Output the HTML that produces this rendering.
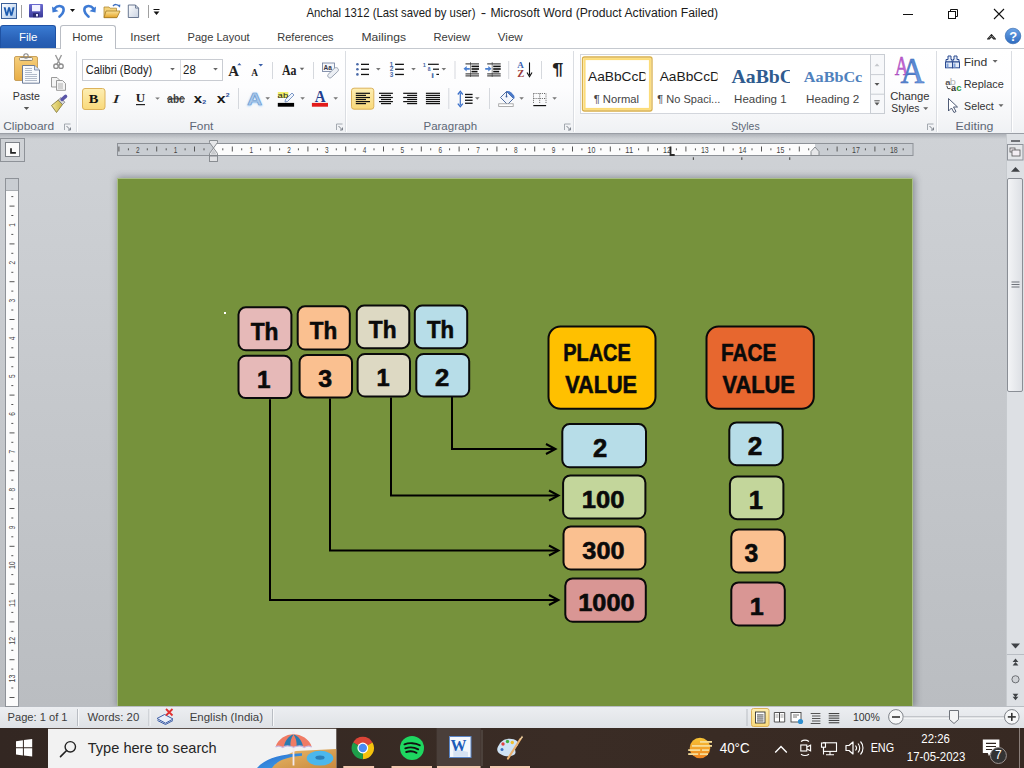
<!DOCTYPE html>
<html><head><meta charset="utf-8">
<style>

*{margin:0;padding:0;box-sizing:border-box}
html,body{width:1024px;height:768px;overflow:hidden;background:#d0d3d8;font-family:"Liberation Sans",sans-serif;position:relative}
.a{position:absolute}
#title{left:0;top:0;width:1024px;height:25px;background:#fff}
#tabs{left:0;top:25px;width:1024px;height:23px;background:#fff}
#ribbon{left:0;top:48px;width:1024px;height:86px;background:linear-gradient(#ffffff 0%,#fdfdfe 45%,#f5f6f8 80%,#eff1f4 100%);border-top:1px solid #c5c9cf;border-bottom:1px solid #9a9ea5}
#work{left:0;top:134px;width:1024px;height:572px;background:linear-gradient(#cfd2d6,#babdc1)}
#page{left:117px;top:178px;width:796px;height:528px;background:#76923c;border:1px solid #a9bf85;border-bottom:none;box-shadow:1px 0 7px 1px rgba(40,45,60,.4)}
#status{left:0;top:706px;width:1024px;height:22px;background:linear-gradient(#eceef1,#dfe2e6);border-top:1px solid #b9bdc3}
#taskbar{left:0;top:728px;width:1024px;height:40px;background:linear-gradient(90deg,#332722 0%,#3a2c25 55%,#372922 100%)}
.sep{position:absolute;width:2px;border-left:1px solid #dadde2;border-right:1px solid #fff}

</style></head><body>
<div id="title" class="a"></div>
<div id="tabs" class="a"></div>
<div id="ribbon" class="a"></div>
<div class="a" style="left:0;top:25px;width:56px;height:23px;background:linear-gradient(#3a7bd2,#2a62b8 60%,#245aad);border:1px solid #1f52a3;border-bottom:none;border-radius:3px 3px 0 0"></div>
<div class="a" style="left:60px;top:25px;width:56px;height:24px;background:#fff;border:1px solid #b9bdc4;border-bottom:none;border-radius:3px 3px 0 0"></div>
<div class="sep" style="left:76px;top:51px;height:81px"></div>
<div class="sep" style="left:345px;top:51px;height:81px"></div>
<div class="sep" style="left:573px;top:51px;height:81px"></div>
<div class="sep" style="left:936px;top:51px;height:81px"></div>
<div class="sep" style="left:1011px;top:51px;height:81px"></div>
<div id="work" class="a"></div>
<div class="a" style="left:0;top:134px;width:1024px;height:5px;background:linear-gradient(rgba(60,66,80,.22),rgba(60,66,80,0))"></div>
<div id="page" class="a"></div>
<svg class="a" style="left:0;top:0" width="1024" height="768" viewBox="0 0 1024 768">
<g fill="none" stroke="#000" stroke-width="2" stroke-linecap="butt" stroke-linejoin="miter">
<path d="M452,397 V449 H555 M391,397.5 V495.5 H558 M330,398.4 V550.5 H558 M270,399.2 V600 H558"/>
<path d="M546,444 L555.5,449 L546,454 M549,490.5 L558.5,495.5 L549,500.5 M549,545.5 L558.5,550.5 L549,555.5 M549,595 L558.5,600 L549,605"/>
</g>
<g stroke="#0a0a0a" stroke-width="2.0">
<rect x="238.50" y="307.30" width="52.90" height="43.00" rx="7.3" fill="#e6b9b8"/>
<rect x="297.70" y="306.30" width="52.10" height="43.20" rx="7.3" fill="#fac090"/>
<rect x="356.80" y="305.60" width="52.50" height="42.60" rx="7.3" fill="#ddd9c3"/>
<rect x="414.80" y="305.60" width="52.40" height="42.60" rx="7.3" fill="#b7dde8"/>
<rect x="238.50" y="355.70" width="52.90" height="42.40" rx="7.3" fill="#e6b9b8"/>
<rect x="299.60" y="354.90" width="52.40" height="42.50" rx="7.3" fill="#fac090"/>
<rect x="357.60" y="354.00" width="52.40" height="42.50" rx="7.3" fill="#ddd9c3"/>
<rect x="416.30" y="354.00" width="52.90" height="42.50" rx="7.3" fill="#b7dde8"/>
<rect x="562.30" y="424.10" width="83.70" height="43.20" rx="7.3" fill="#b7dde8"/>
<rect x="563.10" y="475.40" width="82.30" height="43.10" rx="7.3" fill="#c3d69b"/>
<rect x="563.50" y="526.40" width="81.90" height="43.10" rx="7.3" fill="#fac090"/>
<rect x="565.30" y="578.40" width="80.50" height="43.40" rx="7.3" fill="#d99694"/>
<rect x="729.30" y="422.40" width="53.40" height="42.80" rx="7.3" fill="#b7dde8"/>
<rect x="729.90" y="476.40" width="53.50" height="42.80" rx="7.3" fill="#c3d69b"/>
<rect x="731.30" y="529.40" width="53.50" height="43.10" rx="7.3" fill="#fac090"/>
<rect x="731.30" y="582.40" width="53.50" height="43.10" rx="7.3" fill="#d99694"/>
<rect x="548.50" y="326.50" width="107.00" height="82.30" rx="12" fill="#ffc000"/>
<rect x="706.50" y="326.50" width="107.30" height="82.30" rx="12" fill="#e7672f"/>
</g>
<g fill="#0a0a0a" stroke="#0a0a0a" stroke-width="0.6" font-family="Liberation Sans" font-weight="bold">
<text transform="translate(250.67,339.90) scale(0.923,1)" font-size="24.69">Th</text>
<text transform="translate(309.77,339.00) scale(0.917,1)" font-size="24.55">Th</text>
<text transform="translate(368.87,337.60) scale(0.959,1)" font-size="23.59">Th</text>
<text transform="translate(426.98,337.60) scale(0.944,1)" font-size="23.59">Th</text>
<text transform="translate(257.12,387.80) scale(1.004,1)" font-size="24.20">1</text>
<text transform="translate(318.18,386.80) scale(1.061,1)" font-size="23.43">3</text>
<text transform="translate(376.46,385.90) scale(0.966,1)" font-size="24.49">1</text>
<text transform="translate(435.00,386.00) scale(1.055,1)" font-size="24.29">2</text>
<text transform="translate(592.90,457.30) scale(1.025,1)" font-size="25.00">2</text>
<text transform="translate(581.84,508.30) scale(1.062,1)" font-size="24.08">100</text>
<text transform="translate(582.37,558.90) scale(1.074,1)" font-size="23.52">300</text>
<text transform="translate(578.25,610.90) scale(1.064,1)" font-size="23.80">1000</text>
<text transform="translate(747.68,455.40) scale(1.032,1)" font-size="25.43">2</text>
<text transform="translate(748.64,509.20) scale(1.003,1)" font-size="25.51">1</text>
<text transform="translate(744.38,562.10) scale(0.986,1)" font-size="25.00">3</text>
<text transform="translate(749.86,615.00) scale(1.015,1)" font-size="24.78">1</text>
<text transform="translate(563.20,360.70) scale(0.824,1)" font-size="24.20">PLACE</text>
<text transform="translate(565.18,392.60) scale(0.901,1)" font-size="24.06">VALUE</text>
<text transform="translate(721.05,360.60) scale(0.860,1)" font-size="24.06">FACE</text>
<text transform="translate(722.58,392.60) scale(0.905,1)" font-size="24.06">VALUE</text>
</g>
<rect x="224" y="312" width="2" height="2" fill="#fff"/>
</svg>
<div id="status" class="a"></div>
<div id="taskbar" class="a"></div>
<svg class="a" style="left:0;top:0" width="1024" height="768" font-family="Liberation Sans">
<defs><linearGradient id="gW" x1="0" y1="0" x2="1" y2="1"><stop offset="0" stop-color="#ffffff"/><stop offset="1" stop-color="#a9c6ea"/></linearGradient><linearGradient id="gSave" x1="0" y1="0" x2="0" y2="1"><stop offset="0" stop-color="#6a6ad0"/><stop offset="1" stop-color="#3a3a98"/></linearGradient><linearGradient id="gFold" x1="0" y1="0" x2="0" y2="1"><stop offset="0" stop-color="#fbe49a"/><stop offset="1" stop-color="#e6a52a"/></linearGradient><linearGradient id="gDoc" x1="0" y1="0" x2="1" y2="1"><stop offset="0" stop-color="#ffffff"/><stop offset="1" stop-color="#c9d3e3"/></linearGradient><linearGradient id="gHelp" x1="0" y1="0" x2="0" y2="1"><stop offset="0" stop-color="#6aa3e6"/><stop offset="1" stop-color="#2f6cc0"/></linearGradient></defs>
<rect x="1.5" y="3.5" width="15" height="15" fill="url(#gW)" stroke="#3a5f99" stroke-width="1"/>
<path d="M3.6,7.2 L5.6,7.2 L6.8,12.6 L8.2,7.2 L10,7.2 L11.3,12.6 L12.5,7.2 L14.6,7.2 L12.3,15.8 L10.4,15.8 L9.1,10.8 L7.7,15.8 L5.9,15.8 Z" fill="#1d5cb0"/>
<rect x="21" y="5" width="1" height="13" fill="#a0a0a0"/>
<rect x="29" y="4" width="14" height="13.6" rx="1" fill="url(#gSave)"/>
<rect x="32" y="5" width="8.2" height="6.3" fill="#f2f2ff"/>
<rect x="33" y="13.2" width="6" height="4" fill="#2a2a70"/><rect x="36" y="14" width="2" height="2.4" fill="#e8e8ff"/>
<path d="M54.5,8.5 C58,4.5 64.5,5.5 63.5,11 C63,14 60.5,15.8 59.5,16.6" fill="none" stroke="#3d7ad4" stroke-width="2.6" stroke-linecap="round"/>
<path d="M52,6.5 L52.5,12.6 L58.5,11.2 Z" fill="#3d7ad4"/>
<path d="M70,9 L75,9 L72.5,12.1 Z" fill="#111"/>
<path d="M93.5,8.5 C90,4.5 83.5,5.5 84.5,11 C85,14 87.5,15.8 88.5,16.6" fill="none" stroke="#3d7ad4" stroke-width="2.6" stroke-linecap="round"/>
<path d="M96,6.5 L95.5,12.6 L89.5,11.2 Z" fill="#3d7ad4"/>
<path d="M104,7 L109,7 L110,8.2 L116.5,8.2 L116.5,17.6 L104,17.6 Z" fill="#f3d27a" stroke="#b18a35" stroke-width="0.8"/>
<path d="M106,11 L120,11 L117,17.6 L104,17.6 Z" fill="url(#gFold)" stroke="#a47a22" stroke-width="0.8"/>
<path d="M113,6 C114.5,4 117.5,4 119,6.2" fill="none" stroke="#3d6fc0" stroke-width="1.3"/><path d="M117.6,5 L120,7.8 L120.4,4.6 Z" fill="#3d6fc0"/>
<path d="M128.3,5 L135.5,5 L138.6,8.1 L138.6,17.5 L128.3,17.5 Z" fill="url(#gDoc)" stroke="#5a6a86" stroke-width="0.9"/>
<path d="M135.5,5 L135.5,8.1 L138.6,8.1" fill="none" stroke="#5a6a86" stroke-width="0.8"/>
<rect x="148" y="5" width="1" height="13" fill="#a0a0a0"/>
<rect x="153.5" y="9" width="6" height="1" fill="#111"/><path d="M153.6,11.6 L159.4,11.6 L156.5,14.9 Z" fill="#111"/>
<rect x="903" y="14" width="10" height="1" fill="#111"/>
<rect x="948.5" y="11.5" width="7" height="7" fill="none" stroke="#111" stroke-width="1"/>
<path d="M950.5,11.5 V9.5 H957.5 V16.5 H955.5" fill="none" stroke="#111" stroke-width="1"/>
<path d="M994,9 L1004,19 M1004,9 L994,19" stroke="#111" stroke-width="1.1"/>
<path d="M987.5,39 L991.5,34.5 L995.5,39 L993.8,39 L991.5,36.6 L989.2,39 Z" fill="none" stroke="#222" stroke-width="1.1" stroke-linejoin="round"/>
<circle cx="1013" cy="36" r="7.8" fill="url(#gHelp)" stroke="#2a5fa8" stroke-width="0.6"/>
<text x="1009.3" y="41.2" font-size="13" font-weight="bold" fill="#fff">?</text>
<defs><linearGradient id="gClip" x1="0" y1="0" x2="0" y2="1"><stop offset="0" stop-color="#f6cf7c"/><stop offset="1" stop-color="#e8ad45"/></linearGradient><linearGradient id="gBrush" x1="0" y1="0" x2="1" y2="0"><stop offset="0" stop-color="#f3e79a"/><stop offset="1" stop-color="#c9b545"/></linearGradient></defs>
<rect x="14.5" y="56.5" width="23" height="24" rx="1.5" fill="url(#gClip)" stroke="#c49a52" stroke-width="0.9"/>
<rect x="19.5" y="57.5" width="13" height="3" rx="1" fill="#f4f4f4" stroke="#8b7d60" stroke-width="0.9"/>
<circle cx="26" cy="56" r="2.2" fill="none" stroke="#8a8a8a" stroke-width="1.1"/>
<path d="M22.5,65.5 L34.5,65.5 L39.5,70 L39.5,83.2 L22.5,83.2 Z" fill="#f8fafd" stroke="#5f6f8f" stroke-width="0.9"/>
<path d="M34.5,65.5 L34.5,70 L39.5,70" fill="#dde6f2" stroke="#5f6f8f" stroke-width="0.7"/>
<path d="M25,68.5 H32 M25,70.5 H32 M25,72.5 H32 M25,74.5 H37 M25,76.5 H37 M25,78.5 H37 M25,80.5 H37" stroke="#a9b3c4" stroke-width="0.9"/>
<path d="M23.8,107 L29.2,107 L26.5,110 Z" fill="#555"/>
<path d="M55.5,55 L60.5,65 M61.5,55 L56.5,65" stroke="#9a9a9a" stroke-width="1.4"/>
<circle cx="56" cy="66.2" r="2.2" fill="none" stroke="#8f8f8f" stroke-width="1.4"/><circle cx="61" cy="66.2" r="2.2" fill="none" stroke="#8f8f8f" stroke-width="1.4"/>
<path d="M51.5,77.5 L57,77.5 L59.5,80 L59.5,87 L51.5,87 Z" fill="#f4f4f4" stroke="#8f8f8f" stroke-width="0.9"/>
<path d="M56.5,80.5 L62.5,80.5 L65.5,83.5 L65.5,90.3 L56.5,90.3 Z" fill="#f4f4f4" stroke="#8f8f8f" stroke-width="0.9"/>
<path d="M58,84 H63 M58,86 H63 M58,88 H63" stroke="#a0a0a0" stroke-width="0.8"/>
<path d="M51.5,105.5 L58.5,99.8 L62.5,104.5 L56.5,112.5 Z" fill="url(#gBrush)" stroke="#7d7232" stroke-width="0.8"/>
<path d="M58.3,100 L61,97.6 L64.8,102.3 L62.5,104.5 Z" fill="#dcdcdc" stroke="#6a6a6a" stroke-width="0.7"/>
<path d="M62,99.5 L65.6,96.4" stroke="#5a55a8" stroke-width="3.4" stroke-linecap="round"/>
<path d="M64.5,130 V124 H70.5" fill="none" stroke="#9aa0a8" stroke-width="0.9"/><path d="M66.5,126 L70.5,130 M70.5,127.5 V130 H68" fill="none" stroke="#7d838c" stroke-width="1"/>
<defs><linearGradient id="gSel" x1="0" y1="0" x2="0" y2="1"><stop offset="0" stop-color="#fdeeb3"/><stop offset="1" stop-color="#f9d97a"/></linearGradient><filter id="glow" x="-50%" y="-50%" width="200%" height="200%"><feGaussianBlur stdDeviation="1.2"/></filter></defs>
<rect x="82.5" y="59.5" width="140" height="21" fill="#fff" stroke="#c9ccd2" stroke-width="1"/>
<rect x="180" y="60" width="1" height="20" fill="#d9dce1"/>
<text transform="translate(85.75,74.40) scale(0.880,1)" font-size="12.46" fill="#1e1e1e">Calibri (Body)</text>
<path d="M170.20,68.10 L174.80,68.10 L172.50,70.50 Z" fill="#666"/>
<text transform="translate(183.03,74.40) scale(0.954,1)" font-size="12.03" fill="#1e1e1e">28</text>
<path d="M213.20,68.10 L217.80,68.10 L215.50,70.50 Z" fill="#666"/>
<text transform="translate(228.35,75.80) scale(1.013,1)" font-family="Liberation Serif" font-size="14.70" fill="#222" font-weight="bold">A</text>
<path d="M237.3,65.3 L241.4,65.3 L239.35,63 Z" fill="#3a5fa8"/>
<text transform="translate(251.31,75.80) scale(0.858,1)" font-family="Liberation Serif" font-size="10.91" fill="#222" font-weight="bold">A</text>
<path d="M258.5,64 L263,64 L260.75,66.6 Z" fill="#3a5fa8"/>
<rect x="272" y="62" width="1" height="17" fill="#d5d8dd"/>
<text transform="translate(281.98,75.30) scale(0.784,1)" font-family="Liberation Serif" font-size="15.15" fill="#222" font-weight="bold">Aa</text>
<path d="M299.70,67.80 L304.30,67.80 L302.00,70.20 Z" fill="#666"/>
<rect x="313" y="62" width="1" height="17" fill="#d5d8dd"/>
<rect x="322.5" y="63" width="12" height="8.5" fill="#f4f6fa" stroke="#6b7b99" stroke-width="0.8"/>
<text x="323.6" y="70" font-size="6.5" font-weight="bold" fill="#334">Aa</text>
<path d="M328,74.5 L334.5,68.2 C335.5,67.3 337.3,67.5 338,68.6 C338.7,69.6 338.5,70.8 337.6,71.6 L331.4,77.4 C330.5,78.2 329,78.1 328.3,77.1 C327.6,76.3 327.5,75.2 328,74.5 Z" fill="#eceff4" stroke="#8d97a8" stroke-width="0.9"/>
<rect x="82.5" y="88.5" width="22.5" height="21" rx="2.5" fill="url(#gSel)" stroke="#dcb25a" stroke-width="1"/>
<text transform="translate(88.78,102.70) scale(1.123,1)" font-family="Liberation Serif" font-size="12.82" fill="#111" font-weight="bold">B</text>
<text transform="translate(112.21,102.70) scale(1.747,1)" font-family="Liberation Serif" font-size="12.82" fill="#222" font-style="italic">I</text>
<text transform="translate(135.67,102.30) scale(1.067,1)" font-family="Liberation Serif" font-size="12.21" fill="#222" font-weight="bold">U</text>
<rect x="136" y="104" width="9" height="1.2" fill="#222"/>
<path d="M155.20,97.40 L159.80,97.40 L157.50,99.80 Z" fill="#777"/>
<text transform="translate(167.30,102.70) scale(0.810,1)" font-family="Liberation Sans" font-size="12.41" fill="#444" font-weight="bold">abc</text>
<rect x="167" y="98.3" width="18" height="1.1" fill="#333"/>
<text transform="translate(193.85,103.20) scale(1.169,1)" font-family="Liberation Sans" font-size="12.83" fill="#1a1a1a" font-weight="bold">x</text>
<text transform="translate(202.35,104.20) scale(1.240,1)" font-family="Liberation Sans" font-size="5.71" fill="#2c4d9a" font-weight="bold">2</text>
<text transform="translate(216.84,103.20) scale(1.241,1)" font-family="Liberation Sans" font-size="12.83" fill="#1a1a1a" font-weight="bold">x</text>
<text transform="translate(225.76,97.00) scale(1.203,1)" font-family="Liberation Sans" font-size="5.71" fill="#2c4d9a" font-weight="bold">2</text>
<rect x="238" y="88" width="1" height="21" fill="#d5d8dd"/>
<g filter="url(#glow)"><text transform="translate(246.43,105.60) scale(1.300,1)" font-family="Liberation Sans" font-size="17.68" fill="#9fd0ff" font-weight="bold">A</text></g>
<text transform="translate(247.29,105.00) scale(1.292,1)" font-family="Liberation Sans" font-size="15.94" fill="#a9c8ea" font-weight="bold" stroke="#6d9bd0" stroke-width="0.6">A</text>
<path d="M265.40,97.30 L270.00,97.30 L267.70,99.70 Z" fill="#777"/>
<rect x="277.8" y="92" width="10.5" height="6" fill="#f0ee6a"/>
<text transform="translate(277.62,97.80) scale(1.189,1)" font-family="Liberation Sans" font-size="8.00" fill="#222">ab</text>
<path d="M285.5,99.5 L292,93 L294,95 L287.5,101.5 L285,102 Z" fill="#eef3fb" stroke="#5d7fb8" stroke-width="0.8"/>
<rect x="277.8" y="102.9" width="16.3" height="3.8" fill="#000"/>
<path d="M300.30,97.30 L304.90,97.30 L302.60,99.70 Z" fill="#777"/>
<text transform="translate(314.75,101.90) scale(0.936,1)" font-family="Liberation Serif" font-size="16.06" fill="#1f3f8f" font-weight="bold">A</text>
<rect x="311.9" y="102.9" width="16.1" height="3.8" fill="#e21b1b"/>
<path d="M333.40,97.30 L338.00,97.30 L335.70,99.70 Z" fill="#777"/>
<path d="M336.5,130 V124 H342.5" fill="none" stroke="#9aa0a8" stroke-width="0.9"/><path d="M338.5,126 L342.5,130 M342.5,127.5 V130 H340" fill="none" stroke="#7d838c" stroke-width="1"/>
<circle cx="357.4" cy="64.3" r="1.3" fill="#4a6aa8"/>
<rect x="361" y="63.7" width="8" height="1.3" fill="#111"/>
<circle cx="357.4" cy="69.2" r="1.3" fill="#4a6aa8"/>
<rect x="361" y="68.6" width="8" height="1.3" fill="#111"/>
<circle cx="357.4" cy="74.4" r="1.3" fill="#4a6aa8"/>
<rect x="361" y="73.8" width="8" height="1.3" fill="#111"/>
<path d="M376.00,68.10 L380.60,68.10 L378.30,70.50 Z" fill="#777"/>
<text transform="translate(389.59,66.50) scale(1.044,1)" font-family="Liberation Sans" font-size="6.52" fill="#4a6aa8" font-weight="bold">1</text>
<rect x="395.1" y="63.7" width="8.8" height="1.3" fill="#111"/>
<text transform="translate(389.77,71.40) scale(1.037,1)" font-family="Liberation Sans" font-size="6.43" fill="#4a6aa8" font-weight="bold">2</text>
<rect x="395.1" y="68.6" width="8.8" height="1.3" fill="#111"/>
<text transform="translate(389.84,76.60) scale(1.006,1)" font-family="Liberation Sans" font-size="6.43" fill="#4a6aa8" font-weight="bold">3</text>
<rect x="395.1" y="73.8" width="8.8" height="1.3" fill="#111"/>
<path d="M411.20,68.10 L415.80,68.10 L413.50,70.50 Z" fill="#777"/>
<text transform="translate(422.66,66.60) scale(0.922,1)" font-family="Liberation Sans" font-size="6.23" fill="#4a6aa8" font-weight="bold">1</text>
<rect x="428" y="63.7" width="10.8" height="1.2" fill="#111"/>
<text transform="translate(427.85,70.80) scale(0.750,1)" font-family="Liberation Sans" font-size="6.48" fill="#4a6aa8" font-weight="bold">a</text>
<rect x="433" y="68.6" width="6" height="1.2" fill="#111"/>
<text transform="translate(430.82,77.50) scale(2.197,1)" font-family="Liberation Sans" font-size="7.59" fill="#4a6aa8">i</text>
<rect x="436.4" y="73.8" width="2.6" height="1.2" fill="#111"/>
<path d="M441.50,68.10 L446.10,68.10 L443.80,70.50 Z" fill="#777"/>
<rect x="454.5" y="61" width="1" height="18" fill="#d5d8dd"/>
<path d="M470.5,62.5 V77" stroke="#222" stroke-width="1" stroke-dasharray="1,1"/>
<rect x="465.5" y="63.4" width="13.5" height="1" fill="#222"/>
<rect x="471.5" y="65.6" width="7.5" height="1.6" fill="#111"/>
<rect x="471.5" y="68.2" width="7.5" height="1.6" fill="#111"/>
<rect x="471.5" y="70.8" width="6" height="1.6" fill="#111"/>
<rect x="465.5" y="73.4" width="13.5" height="1" fill="#222"/>
<rect x="465.5" y="75.4" width="13.5" height="1" fill="#222"/>
<path d="M463.5,68.8 L466.7,66 L466.7,67.9 L469.8,67.9 L469.8,69.7 L466.7,69.7 L466.7,71.6 Z" fill="#4a7fd0"/>
<path d="M492.2,62.5 V77" stroke="#222" stroke-width="1" stroke-dasharray="1,1"/>
<rect x="487.2" y="63.4" width="13.5" height="1" fill="#222"/>
<rect x="493.2" y="65.6" width="7.5" height="1.6" fill="#111"/>
<rect x="493.2" y="68.2" width="7.5" height="1.6" fill="#111"/>
<rect x="493.2" y="70.8" width="6" height="1.6" fill="#111"/>
<rect x="487.2" y="73.4" width="13.5" height="1" fill="#222"/>
<rect x="487.2" y="75.4" width="13.5" height="1" fill="#222"/>
<path d="M491.5,68.8 L488.3,66 L488.3,67.9 L485.2,67.9 L485.2,69.7 L488.3,69.7 L488.3,71.6 Z" fill="#4a7fd0"/>
<rect x="508.2" y="61" width="1" height="18" fill="#d5d8dd"/>
<text transform="translate(517.31,68.30) scale(1.089,1)" font-family="Liberation Serif" font-size="8.33" fill="#3a5fb0" font-weight="bold">A</text>
<text transform="translate(517.13,76.50) scale(1.077,1)" font-family="Liberation Serif" font-size="9.77" fill="#9a3a3a" font-weight="bold">Z</text>
<path d="M529.5,62.4 V75" stroke="#111" stroke-width="1.1"/><path d="M527,72.5 L529.5,76.6 L532,72.5" fill="none" stroke="#111" stroke-width="1.1"/>
<rect x="541" y="61" width="1" height="18" fill="#d5d8dd"/>
<text transform="translate(552.20,75.30) scale(1.243,1)" font-family="Liberation Sans" font-size="16.09" fill="#222" font-weight="bold">¶</text>
<rect x="351.5" y="88.2" width="22.3" height="21" rx="2.5" fill="url(#gSel)" stroke="#dcb25a" stroke-width="1"/>
<rect x="355.8" y="92.7" width="14.2" height="1.2" fill="#111"/>
<rect x="379" y="92.7" width="13.9" height="1.2" fill="#111"/>
<rect x="403.2" y="92.7" width="13.9" height="1.2" fill="#111"/>
<rect x="425.9" y="92.7" width="14.1" height="1.2" fill="#111"/>
<rect x="355.8" y="94.8" width="10.2" height="1.2" fill="#111"/>
<rect x="381" y="94.8" width="10" height="1.2" fill="#111"/>
<rect x="407.1" y="94.8" width="10" height="1.2" fill="#111"/>
<rect x="425.9" y="94.8" width="14.1" height="1.2" fill="#111"/>
<rect x="355.8" y="96.9" width="14.2" height="1.2" fill="#111"/>
<rect x="379" y="96.9" width="13.9" height="1.2" fill="#111"/>
<rect x="403.2" y="96.9" width="13.9" height="1.2" fill="#111"/>
<rect x="425.9" y="96.9" width="14.1" height="1.2" fill="#111"/>
<rect x="355.8" y="98.9" width="10.2" height="1.2" fill="#111"/>
<rect x="381" y="98.9" width="10" height="1.2" fill="#111"/>
<rect x="407.1" y="98.9" width="10" height="1.2" fill="#111"/>
<rect x="425.9" y="98.9" width="14.1" height="1.2" fill="#111"/>
<rect x="355.8" y="101.0" width="14.2" height="1.2" fill="#111"/>
<rect x="379" y="101.0" width="13.9" height="1.2" fill="#111"/>
<rect x="403.2" y="101.0" width="13.9" height="1.2" fill="#111"/>
<rect x="425.9" y="101.0" width="14.1" height="1.2" fill="#111"/>
<rect x="355.8" y="103.0" width="10.2" height="1.2" fill="#111"/>
<rect x="381" y="103.0" width="10" height="1.2" fill="#111"/>
<rect x="407.1" y="103.0" width="10" height="1.2" fill="#111"/>
<rect x="425.9" y="103.0" width="14.1" height="1.2" fill="#111"/>
<rect x="448.3" y="88" width="1" height="21" fill="#d5d8dd"/>
<path d="M460.3,93 V105" stroke="#3a6fc8" stroke-width="1.2"/><path d="M457.8,94.5 L460.3,91.4 L462.8,94.5 M457.8,103.6 L460.3,106.7 L462.8,103.6" fill="none" stroke="#3a6fc8" stroke-width="1.3"/>
<rect x="465" y="93.8" width="7.6" height="1.3" fill="#111"/>
<rect x="465" y="96.7" width="7.6" height="1.3" fill="#111"/>
<rect x="465" y="99.6" width="7.6" height="1.3" fill="#111"/>
<rect x="465" y="102.6" width="7.6" height="1.3" fill="#111"/>
<path d="M475.00,97.30 L479.60,97.30 L477.30,99.70 Z" fill="#777"/>
<rect x="489" y="88" width="1" height="21" fill="#d5d8dd"/>
<path d="M500.5,97.5 L506.5,91.5 L513.5,98.5 L507.5,104.5 Z" fill="#f2f5fb" stroke="#3d5e98" stroke-width="0.9"/>
<path d="M506.5,91.5 C508.5,90 511.5,92 514,95.5 C515,97.5 514.5,99.5 513.5,98.5" fill="#4a79c8"/>
<path d="M506.5,91.5 V96" stroke="#3d5e98" stroke-width="0.9"/><circle cx="506.5" cy="96.5" r="0.9" fill="#3d5e98"/>
<rect x="498.7" y="103.8" width="14.5" height="2.7" fill="#fff" stroke="#9a9a9a" stroke-width="0.8"/>
<path d="M519.30,97.30 L523.90,97.30 L521.60,99.70 Z" fill="#777"/>
<path d="M533.5,93.5 H546 M533.5,98.5 H546 M533.5,93.5 V104 M539.7,93.5 V104 M546,93.5 V104" stroke="#555" stroke-width="0.9" stroke-dasharray="1,1.1"/>
<rect x="533.3" y="105" width="12.8" height="1.2" fill="#111"/>
<path d="M552.30,97.30 L556.90,97.30 L554.60,99.70 Z" fill="#777"/>
<path d="M564.5,130 V124 H570.5" fill="none" stroke="#9aa0a8" stroke-width="0.9"/><path d="M566.5,126 L570.5,130 M570.5,127.5 V130 H568" fill="none" stroke="#7d838c" stroke-width="1"/>
<defs><clipPath id="cN"><rect x="582" y="60" width="63.5" height="30"/></clipPath><clipPath id="cNS"><rect x="655" y="60" width="62.6" height="30"/></clipPath><clipPath id="cH1"><rect x="725" y="60" width="65" height="30"/></clipPath><linearGradient id="gSty" x1="0" y1="0" x2="0" y2="1"><stop offset="0" stop-color="#fdf6d8"/><stop offset="0.5" stop-color="#ffffff"/><stop offset="1" stop-color="#fdf3cf"/></linearGradient><linearGradient id="gA1" x1="0" y1="0" x2="1" y2="1"><stop offset="0" stop-color="#b04ac0"/><stop offset="1" stop-color="#d27be0"/></linearGradient><linearGradient id="gA2" x1="0" y1="0" x2="1" y2="1"><stop offset="0" stop-color="#3f6fc0"/><stop offset="1" stop-color="#7aa8ea"/></linearGradient></defs>
<rect x="580.5" y="54.5" width="304" height="59" fill="#fff" stroke="#d3d6dc" stroke-width="1"/>
<rect x="870.5" y="54.5" width="14" height="59" fill="#f7f8fa" stroke="#c9cdd3" stroke-width="1"/>
<path d="M870.5,74.6 H884.5 M870.5,94.2 H884.5" stroke="#c9cdd3" stroke-width="1"/>
<path d="M874.5,66.2 L879.5,66.2 L877,63.4 Z" fill="#c4c7cc"/>
<path d="M874.5,83 L879.5,83 L877,85.8 Z" fill="#555"/>
<rect x="874.3" y="100.3" width="5.4" height="1" fill="#555"/><path d="M874.5,102.6 L879.5,102.6 L877,105.4 Z" fill="#555"/>
<rect x="582.5" y="57" width="69.5" height="54" rx="2" fill="url(#gSty)" stroke="#d9b04c" stroke-width="1.3"/>
<rect x="584.6" y="59.1" width="65.3" height="49.8" fill="#fff" stroke="#fcdc78" stroke-width="2"/>
<g clip-path="url(#cN)"><text transform="translate(588.00,80.60) scale(1.128,1)" font-size="12.17" fill="#1b1b1b">AaBbCcDd</text></g>
<text transform="translate(593.65,102.50) scale(1.063,1)" font-size="10.58" fill="#444">¶ Normal</text>
<g clip-path="url(#cNS)"><text transform="translate(659.70,80.60) scale(1.128,1)" font-size="12.17" fill="#1b1b1b">AaBbCcDd</text></g>
<text transform="translate(657.36,102.50) scale(1.044,1)" font-size="10.58" fill="#444">¶ No Spaci...</text>
<g clip-path="url(#cH1)"><text transform="translate(731.60,82.60) scale(1.089,1)" font-family="Liberation Serif" font-size="18.13" fill="#2f5b8f" font-weight="bold">AaBbCc</text></g>
<text transform="translate(734.08,102.80) scale(1.048,1)" font-size="11.01" fill="#444">Heading 1</text>
<text transform="translate(803.84,81.80) scale(1.043,1)" font-family="Liberation Serif" font-size="15.54" fill="#4f81bd" font-weight="bold">AaBbCc</text>
<text transform="translate(805.96,102.80) scale(1.062,1)" font-size="11.01" fill="#444">Heading 2</text>
<text transform="translate(894.71,74.60) scale(0.676,1)" font-family="Liberation Serif" font-size="28.33" fill="url(#gA1)" stroke="#a040b8" stroke-width="0.5">A</text>
<text transform="translate(900.57,82.80) scale(0.901,1)" font-family="Liberation Serif" font-size="36.52" fill="url(#gA2)" stroke="#3a68b8" stroke-width="0.6">A</text>
<text transform="translate(890.24,99.70) scale(1.125,1)" font-size="10.00" fill="#333">Change</text>
<text transform="translate(891.23,111.60) scale(1.036,1)" font-size="10.00" fill="#333">Styles</text>
<path d="M923.20,107.20 L928.20,107.20 L925.70,110.00 Z" fill="#666"/>
<path d="M927.5,130 V124 H933.5" fill="none" stroke="#9aa0a8" stroke-width="0.9"/><path d="M929.5,126 L933.5,130 M933.5,127.5 V130 H931" fill="none" stroke="#7d838c" stroke-width="1"/>
<g fill="#e4ecf8" stroke="#2a4a90" stroke-width="1"><path d="M948,56 H951 V59.5 H952 V62 H946 V59.5 H948 Z"/><path d="M954,56 H957 V59.5 H959 V62 H953 V59.5 H954 Z"/><rect x="945.5" y="62" width="7" height="5.8"/><rect x="952.5" y="62" width="7" height="5.8"/></g>
<rect x="946.5" y="63.5" width="2" height="4" fill="#7fa0d8"/><rect x="953.5" y="63.5" width="2" height="4" fill="#7fa0d8"/>
<text transform="translate(963.63,65.50) scale(1.166,1)" font-size="10.43" fill="#333">Find</text>
<path d="M992.60,59.90 L997.60,59.90 L995.10,62.70 Z" fill="#666"/>
<text transform="translate(945.22,84.80) scale(1.174,1)" font-family="Liberation Sans" font-size="7.96" fill="#555" font-weight="bold">a</text>
<text transform="translate(949.78,84.80) scale(1.221,1)" font-family="Liberation Sans" font-size="9.10" fill="#b5b5b5">b</text>
<text transform="translate(951.03,91.00) scale(1.052,1)" font-family="Liberation Sans" font-size="8.70" fill="#333" font-weight="bold">a</text>
<text transform="translate(956.22,91.00) scale(1.090,1)" font-family="Liberation Sans" font-size="8.70" fill="#2a9a3a" font-weight="bold">c</text>
<path d="M946.8,85.8 L947.8,88.6 H950.5" fill="none" stroke="#333" stroke-width="0.9"/>
<rect x="955.5" y="86" width="5.8" height="5.2" fill="#2a8a2a" opacity="0.0"/>
<text transform="translate(963.73,87.70) scale(1.092,1)" font-size="10.00" fill="#333">Replace</text>
<path d="M948.5,98.5 L948.5,111 L951.5,108 L954,112.5 L956,111.5 L953.5,107 L957.5,107 Z" fill="#fff" stroke="#3c4a66" stroke-width="0.9" stroke-linejoin="round"/>
<text transform="translate(964.12,109.80) scale(1.023,1)" font-size="10.43" fill="#333">Select</text>
<path d="M998.50,104.20 L1003.50,104.20 L1001.00,107.00 Z" fill="#666"/>
<rect x="117.5" y="143.5" width="795.5" height="12" fill="#c9cdd2" stroke="#8e9298" stroke-width="1"/>
<rect x="213.4" y="144" width="601.6" height="11" fill="#fcfcfc"/>
<rect x="118.4" y="146.5" width="1" height="5" fill="#555"/>
<rect x="127.9" y="148.3" width="1" height="2" fill="#555"/>
<rect x="146.8" y="148.3" width="1" height="2" fill="#555"/>
<rect x="156.2" y="146.5" width="1" height="5" fill="#555"/>
<rect x="165.7" y="148.3" width="1" height="2" fill="#555"/>
<rect x="184.6" y="148.3" width="1" height="2" fill="#555"/>
<rect x="194.0" y="146.5" width="1" height="5" fill="#555"/>
<rect x="203.5" y="148.3" width="1" height="2" fill="#555"/>
<rect x="222.3" y="148.3" width="1" height="2" fill="#555"/>
<rect x="231.8" y="146.5" width="1" height="5" fill="#555"/>
<rect x="241.2" y="148.3" width="1" height="2" fill="#555"/>
<rect x="260.1" y="148.3" width="1" height="2" fill="#555"/>
<rect x="269.6" y="146.5" width="1" height="5" fill="#555"/>
<rect x="279.1" y="148.3" width="1" height="2" fill="#555"/>
<rect x="297.9" y="148.3" width="1" height="2" fill="#555"/>
<rect x="307.4" y="146.5" width="1" height="5" fill="#555"/>
<rect x="316.9" y="148.3" width="1" height="2" fill="#555"/>
<rect x="335.8" y="148.3" width="1" height="2" fill="#555"/>
<rect x="345.2" y="146.5" width="1" height="5" fill="#555"/>
<rect x="354.6" y="148.3" width="1" height="2" fill="#555"/>
<rect x="373.5" y="148.3" width="1" height="2" fill="#555"/>
<rect x="383.0" y="146.5" width="1" height="5" fill="#555"/>
<rect x="392.4" y="148.3" width="1" height="2" fill="#555"/>
<rect x="411.4" y="148.3" width="1" height="2" fill="#555"/>
<rect x="420.8" y="146.5" width="1" height="5" fill="#555"/>
<rect x="430.2" y="148.3" width="1" height="2" fill="#555"/>
<rect x="449.1" y="148.3" width="1" height="2" fill="#555"/>
<rect x="458.6" y="146.5" width="1" height="5" fill="#555"/>
<rect x="468.0" y="148.3" width="1" height="2" fill="#555"/>
<rect x="486.9" y="148.3" width="1" height="2" fill="#555"/>
<rect x="496.4" y="146.5" width="1" height="5" fill="#555"/>
<rect x="505.9" y="148.3" width="1" height="2" fill="#555"/>
<rect x="524.8" y="148.3" width="1" height="2" fill="#555"/>
<rect x="534.2" y="146.5" width="1" height="5" fill="#555"/>
<rect x="543.6" y="148.3" width="1" height="2" fill="#555"/>
<rect x="562.5" y="148.3" width="1" height="2" fill="#555"/>
<rect x="572.0" y="146.5" width="1" height="5" fill="#555"/>
<rect x="581.4" y="148.3" width="1" height="2" fill="#555"/>
<rect x="600.4" y="148.3" width="1" height="2" fill="#555"/>
<rect x="609.8" y="146.5" width="1" height="5" fill="#555"/>
<rect x="619.2" y="148.3" width="1" height="2" fill="#555"/>
<rect x="638.1" y="148.3" width="1" height="2" fill="#555"/>
<rect x="647.6" y="146.5" width="1" height="5" fill="#555"/>
<rect x="657.0" y="148.3" width="1" height="2" fill="#555"/>
<rect x="675.9" y="148.3" width="1" height="2" fill="#555"/>
<rect x="685.4" y="146.5" width="1" height="5" fill="#555"/>
<rect x="694.9" y="148.3" width="1" height="2" fill="#555"/>
<rect x="713.8" y="148.3" width="1" height="2" fill="#555"/>
<rect x="723.2" y="146.5" width="1" height="5" fill="#555"/>
<rect x="732.6" y="148.3" width="1" height="2" fill="#555"/>
<rect x="751.5" y="148.3" width="1" height="2" fill="#555"/>
<rect x="761.0" y="146.5" width="1" height="5" fill="#555"/>
<rect x="770.4" y="148.3" width="1" height="2" fill="#555"/>
<rect x="789.3" y="148.3" width="1" height="2" fill="#555"/>
<rect x="798.8" y="146.5" width="1" height="5" fill="#555"/>
<rect x="808.2" y="148.3" width="1" height="2" fill="#555"/>
<rect x="827.1" y="148.3" width="1" height="2" fill="#555"/>
<rect x="836.6" y="146.5" width="1" height="5" fill="#555"/>
<rect x="846.0" y="148.3" width="1" height="2" fill="#555"/>
<rect x="864.9" y="148.3" width="1" height="2" fill="#555"/>
<rect x="874.4" y="146.5" width="1" height="5" fill="#555"/>
<rect x="883.8" y="148.3" width="1" height="2" fill="#555"/>
<rect x="902.7" y="148.3" width="1" height="2" fill="#555"/>
<text x="136.0" y="152.6" font-size="9.0" fill="#444" textLength="3.6" lengthAdjust="spacingAndGlyphs">2</text>
<text x="173.8" y="152.6" font-size="9.0" fill="#444" textLength="3.6" lengthAdjust="spacingAndGlyphs">1</text>
<text x="249.4" y="152.6" font-size="9.0" fill="#444" textLength="3.6" lengthAdjust="spacingAndGlyphs">1</text>
<text x="287.2" y="152.6" font-size="9.0" fill="#444" textLength="3.6" lengthAdjust="spacingAndGlyphs">2</text>
<text x="325.0" y="152.6" font-size="9.0" fill="#444" textLength="3.6" lengthAdjust="spacingAndGlyphs">3</text>
<text x="362.8" y="152.6" font-size="9.0" fill="#444" textLength="3.6" lengthAdjust="spacingAndGlyphs">4</text>
<text x="400.6" y="152.6" font-size="9.0" fill="#444" textLength="3.6" lengthAdjust="spacingAndGlyphs">5</text>
<text x="438.4" y="152.6" font-size="9.0" fill="#444" textLength="3.6" lengthAdjust="spacingAndGlyphs">6</text>
<text x="476.2" y="152.6" font-size="9.0" fill="#444" textLength="3.6" lengthAdjust="spacingAndGlyphs">7</text>
<text x="514.0" y="152.6" font-size="9.0" fill="#444" textLength="3.6" lengthAdjust="spacingAndGlyphs">8</text>
<text x="551.8" y="152.6" font-size="9.0" fill="#444" textLength="3.6" lengthAdjust="spacingAndGlyphs">9</text>
<text x="587.5" y="152.6" font-size="9.0" fill="#444" textLength="7.8" lengthAdjust="spacingAndGlyphs">10</text>
<text x="625.3" y="152.6" font-size="9.0" fill="#444" textLength="7.8" lengthAdjust="spacingAndGlyphs">11</text>
<text x="663.1" y="152.6" font-size="9.0" fill="#444" textLength="7.8" lengthAdjust="spacingAndGlyphs">12</text>
<text x="700.9" y="152.6" font-size="9.0" fill="#444" textLength="7.8" lengthAdjust="spacingAndGlyphs">13</text>
<text x="738.7" y="152.6" font-size="9.0" fill="#444" textLength="7.8" lengthAdjust="spacingAndGlyphs">14</text>
<text x="776.5" y="152.6" font-size="9.0" fill="#444" textLength="7.8" lengthAdjust="spacingAndGlyphs">15</text>
<text x="852.1" y="152.6" font-size="9.0" fill="#444" textLength="7.8" lengthAdjust="spacingAndGlyphs">17</text>
<text x="889.9" y="152.6" font-size="9.0" fill="#444" textLength="7.8" lengthAdjust="spacingAndGlyphs">18</text>
<path d="M209.5,140.5 H217.5 V142.5 L213.5,148 L217.5,153.5 V155.5 H209.5 V153.5 L213.5,148 L209.5,142.5 Z" fill="#e6e7e9" stroke="#808489" stroke-width="0.9"/>
<path d="M210.5,154.5 L213.5,149.5 L216.5,154.5 Z" fill="#c8cacd"/>
<rect x="209.5" y="156" width="8" height="5.5" fill="#e0e1e3" stroke="#808489" stroke-width="0.9"/>
<path d="M811,155.5 V151.5 L815,147 L819,151.5 V155.5 Z" fill="#e6e7e9" stroke="#808489" stroke-width="0.9"/>
<path d="M670.5,146.5 V155 H674.7" fill="none" stroke="#2a2a2a" stroke-width="1.8"/>
<rect x="692.8" y="157.3" width="1.2" height="2.6" fill="#555"/>
<rect x="741.2" y="157.3" width="1.2" height="2.6" fill="#555"/>
<rect x="789.1" y="157.3" width="1.2" height="2.6" fill="#555"/>
<rect x="0.5" y="138.5" width="24" height="23" fill="none" stroke="#8e9298" stroke-width="1"/>
<rect x="5.5" y="142.5" width="14" height="14" fill="#fafafa" stroke="#7d8187" stroke-width="1"/>
<path d="M11,148.2 V152.8 H15.9" fill="none" stroke="#222" stroke-width="1.7"/>
<rect x="5.5" y="178.5" width="13" height="528" fill="#fcfcfc" stroke="#8e9298" stroke-width="1"/>
<rect x="6" y="179" width="12" height="11.5" fill="#c9cdd2"/>
<rect x="6" y="190.2" width="12" height="0.8" fill="#9ca0a6"/>
<rect x="11.3" y="196.1" width="2" height="1" fill="#555"/>
<rect x="9.5" y="205.6" width="5" height="1" fill="#555"/>
<rect x="11.3" y="215.0" width="2" height="1" fill="#555"/>
<text transform="translate(15.4,225.0) rotate(-90)" x="-1.8" y="0" font-size="9.0" fill="#444" textLength="3.6" lengthAdjust="spacingAndGlyphs">1</text>
<rect x="11.3" y="233.9" width="2" height="1" fill="#555"/>
<rect x="9.5" y="243.4" width="5" height="1" fill="#555"/>
<rect x="11.3" y="252.8" width="2" height="1" fill="#555"/>
<text transform="translate(15.4,262.8) rotate(-90)" x="-1.8" y="0" font-size="9.0" fill="#444" textLength="3.6" lengthAdjust="spacingAndGlyphs">2</text>
<rect x="11.3" y="271.8" width="2" height="1" fill="#555"/>
<rect x="9.5" y="281.2" width="5" height="1" fill="#555"/>
<rect x="11.3" y="290.6" width="2" height="1" fill="#555"/>
<text transform="translate(15.4,300.6) rotate(-90)" x="-1.8" y="0" font-size="9.0" fill="#444" textLength="3.6" lengthAdjust="spacingAndGlyphs">3</text>
<rect x="11.3" y="309.5" width="2" height="1" fill="#555"/>
<rect x="9.5" y="319.0" width="5" height="1" fill="#555"/>
<rect x="11.3" y="328.4" width="2" height="1" fill="#555"/>
<text transform="translate(15.4,338.4) rotate(-90)" x="-1.8" y="0" font-size="9.0" fill="#444" textLength="3.6" lengthAdjust="spacingAndGlyphs">4</text>
<rect x="11.3" y="347.3" width="2" height="1" fill="#555"/>
<rect x="9.5" y="356.8" width="5" height="1" fill="#555"/>
<rect x="11.3" y="366.2" width="2" height="1" fill="#555"/>
<text transform="translate(15.4,376.2) rotate(-90)" x="-1.8" y="0" font-size="9.0" fill="#444" textLength="3.6" lengthAdjust="spacingAndGlyphs">5</text>
<rect x="11.3" y="385.1" width="2" height="1" fill="#555"/>
<rect x="9.5" y="394.6" width="5" height="1" fill="#555"/>
<rect x="11.3" y="404.0" width="2" height="1" fill="#555"/>
<text transform="translate(15.4,414.0) rotate(-90)" x="-1.8" y="0" font-size="9.0" fill="#444" textLength="3.6" lengthAdjust="spacingAndGlyphs">6</text>
<rect x="11.3" y="422.9" width="2" height="1" fill="#555"/>
<rect x="9.5" y="432.4" width="5" height="1" fill="#555"/>
<rect x="11.3" y="441.8" width="2" height="1" fill="#555"/>
<text transform="translate(15.4,451.8) rotate(-90)" x="-1.8" y="0" font-size="9.0" fill="#444" textLength="3.6" lengthAdjust="spacingAndGlyphs">7</text>
<rect x="11.3" y="460.7" width="2" height="1" fill="#555"/>
<rect x="9.5" y="470.2" width="5" height="1" fill="#555"/>
<rect x="11.3" y="479.6" width="2" height="1" fill="#555"/>
<text transform="translate(15.4,489.6) rotate(-90)" x="-1.8" y="0" font-size="9.0" fill="#444" textLength="3.6" lengthAdjust="spacingAndGlyphs">8</text>
<rect x="11.3" y="498.5" width="2" height="1" fill="#555"/>
<rect x="9.5" y="508.0" width="5" height="1" fill="#555"/>
<rect x="11.3" y="517.5" width="2" height="1" fill="#555"/>
<text transform="translate(15.4,527.4) rotate(-90)" x="-1.8" y="0" font-size="9.0" fill="#444" textLength="3.6" lengthAdjust="spacingAndGlyphs">9</text>
<rect x="11.3" y="536.3" width="2" height="1" fill="#555"/>
<rect x="9.5" y="545.8" width="5" height="1" fill="#555"/>
<rect x="11.3" y="555.2" width="2" height="1" fill="#555"/>
<text transform="translate(15.4,565.2) rotate(-90)" x="-3.9" y="0" font-size="9.0" fill="#444" textLength="7.8" lengthAdjust="spacingAndGlyphs">10</text>
<rect x="11.3" y="574.1" width="2" height="1" fill="#555"/>
<rect x="9.5" y="583.6" width="5" height="1" fill="#555"/>
<rect x="11.3" y="593.0" width="2" height="1" fill="#555"/>
<text transform="translate(15.4,603.0) rotate(-90)" x="-3.9" y="0" font-size="9.0" fill="#444" textLength="7.8" lengthAdjust="spacingAndGlyphs">11</text>
<rect x="11.3" y="611.9" width="2" height="1" fill="#555"/>
<rect x="9.5" y="621.4" width="5" height="1" fill="#555"/>
<rect x="11.3" y="630.8" width="2" height="1" fill="#555"/>
<text transform="translate(15.4,640.8) rotate(-90)" x="-3.9" y="0" font-size="9.0" fill="#444" textLength="7.8" lengthAdjust="spacingAndGlyphs">12</text>
<rect x="11.3" y="649.8" width="2" height="1" fill="#555"/>
<rect x="9.5" y="659.2" width="5" height="1" fill="#555"/>
<rect x="11.3" y="668.6" width="2" height="1" fill="#555"/>
<text transform="translate(15.4,678.6) rotate(-90)" x="-3.9" y="0" font-size="9.0" fill="#444" textLength="7.8" lengthAdjust="spacingAndGlyphs">13</text>
<rect x="11.3" y="687.5" width="2" height="1" fill="#555"/>
<rect x="9.5" y="697.0" width="5" height="1" fill="#555"/>
<rect x="1006" y="134" width="18" height="572" fill="#dde0e4"/>
<rect x="1006" y="134" width="1" height="572" fill="#c6cace"/>
<rect x="1011" y="140" width="9" height="2" fill="#6d7075"/>
<rect x="1007.5" y="144.5" width="15.5" height="15.5" fill="#e4e6e9" stroke="#8f939a" stroke-width="1"/>
<rect x="1010" y="148" width="5" height="4" fill="#f3eef3" stroke="#555" stroke-width="0.8"/><rect x="1012" y="150" width="8" height="6" fill="#f3eef3" stroke="#555" stroke-width="0.8"/>
<path d="M1011,171.8 L1020,171.8 L1015.5,167 Z" fill="#3f4246"/>
<defs><linearGradient id="gThumb" x1="0" y1="0" x2="1" y2="0"><stop offset="0" stop-color="#f4f5f7"/><stop offset="1" stop-color="#dcdfe4"/></linearGradient></defs>
<rect x="1007.5" y="178.5" width="15" height="213" rx="1.5" fill="url(#gThumb)" stroke="#8a8e95" stroke-width="1"/>
<rect x="1011.5" y="281.5" width="8" height="1" fill="#6f737a"/>
<rect x="1011.5" y="284" width="8" height="1" fill="#6f737a"/>
<rect x="1011.5" y="286.5" width="8" height="1" fill="#6f737a"/>
<path d="M1011,643.5 L1020,643.5 L1015.5,648.5 Z" fill="#3f4246"/>
<rect x="1007" y="654" width="17" height="1" fill="#b9bdc3"/>
<path d="M1012.6,662 L1015.5,658.6 L1018.4,662 Z M1012.6,665.4 L1015.5,662 L1018.4,665.4 Z" fill="#3f4246"/>
<circle cx="1015.5" cy="679.3" r="3.6" fill="#cfd2d6" stroke="#6d7075" stroke-width="1"/>
<path d="M1012.6,693.8 L1015.5,697.2 L1018.4,693.8 Z M1012.6,696.8 L1015.5,700.2 L1018.4,696.8 Z" fill="#3f4246"/>
<text transform="translate(7.61,720.80) scale(0.997,1)" font-size="11.16" fill="#3d3d3d">Page: 1 of 1</text>
<rect x="77" y="709" width="1" height="17" fill="#b9bdc3"/><rect x="78" y="709" width="1" height="17" fill="#f7f8f9"/>
<text transform="translate(87.54,720.80) scale(1.022,1)" font-size="11.16" fill="#3d3d3d">Words: 20</text>
<rect x="148.5" y="709" width="1" height="17" fill="#b9bdc3"/><rect x="149.5" y="709" width="1" height="17" fill="#f7f8f9"/>
<path d="M157,718.5 L164.5,714.5 L173,719 L165.5,723.2 Z" fill="#e9eef8" stroke="#3d5ea8" stroke-width="1"/>
<path d="M157.5,720.5 L165.5,724.5 L173,720.5" fill="none" stroke="#3d5ea8" stroke-width="1"/>
<path d="M166,709 L172.5,715.5 M172.5,709 L166,715.5" stroke="#e03030" stroke-width="1.8"/>
<text transform="translate(189.68,720.90) scale(1.029,1)" font-size="11.16" fill="#3d3d3d">English (India)</text>
<rect x="272" y="709" width="1" height="17" fill="#b9bdc3"/><rect x="273" y="709" width="1" height="17" fill="#f7f8f9"/>
<rect x="746.5" y="709" width="1" height="17" fill="#b9bdc3"/>
<rect x="751.5" y="708.5" width="17.5" height="18" rx="2" fill="url(#gSel)" stroke="#dcb25a" stroke-width="1"/>
<rect x="755.5" y="712" width="9.5" height="11" fill="#fff" stroke="#333" stroke-width="0.9"/>
<rect x="757" y="714.5" width="6.5" height="0.9" fill="#333"/>
<rect x="757" y="716.5" width="6.5" height="0.9" fill="#333"/>
<rect x="757" y="718.5" width="6.5" height="0.9" fill="#333"/>
<rect x="757" y="720.5" width="6.5" height="0.9" fill="#333"/>
<path d="M774.3,712.5 H779.5 V722 H774.3 Z M779.5,712.5 H784.7 V722 H779.5 Z" fill="#fff" stroke="#444" stroke-width="0.9"/>
<path d="M775.5,715 H778.5 M775.5,717 H778.5 M780.5,715 H783.5 M780.5,717 H783.5" stroke="#777" stroke-width="0.7"/>
<rect x="791" y="712.5" width="10" height="9.5" fill="#fff" stroke="#444" stroke-width="0.9"/><circle cx="800.5" cy="721.5" r="2.6" fill="#2f8fd0"/><path d="M793,715 H799 M793,717 H797" stroke="#555" stroke-width="0.8"/>
<rect x="810.7" y="713" width="9.7" height="1" fill="#555"/>
<rect x="812" y="715.5" width="8.4" height="1" fill="#555"/>
<rect x="812" y="718" width="8.4" height="1" fill="#555"/>
<rect x="812" y="720.5" width="8.4" height="1" fill="#555"/>
<rect x="810.7" y="723" width="9.7" height="1" fill="#555"/>
<rect x="828.7" y="713" width="10.6" height="1.1" fill="#444"/>
<rect x="828.7" y="715.3" width="10.6" height="1.1" fill="#444"/>
<rect x="828.7" y="717.6" width="10.6" height="1.1" fill="#444"/>
<rect x="828.7" y="719.9" width="10.6" height="1.1" fill="#444"/>
<rect x="828.7" y="722.2" width="10.6" height="1.1" fill="#444"/>
<text transform="translate(852.91,721.00) scale(0.969,1)" font-size="10.87" fill="#333">100%</text>
<circle cx="895.9" cy="716.9" r="7.3" fill="#f6f7f8" stroke="#7d8187" stroke-width="1"/><rect x="892" y="716.2" width="8" height="1.6" fill="#333"/>
<rect x="903.5" y="716.5" width="101" height="1" fill="#9da1a7"/><rect x="903.5" y="717.5" width="101" height="1" fill="#ffffff"/>
<path d="M949.5,710.5 H958.5 V719.5 L954,723.5 L949.5,719.5 Z" fill="#f4f5f6" stroke="#6f737a" stroke-width="1"/>
<circle cx="1011.8" cy="716.9" r="7.3" fill="#f6f7f8" stroke="#7d8187" stroke-width="1"/><rect x="1007.8" y="716.1" width="8" height="1.6" fill="#333"/><rect x="1011" y="712.9" width="1.6" height="8" fill="#333"/>
<defs><linearGradient id="gSand" x1="0" y1="0" x2="1" y2="1"><stop offset="0" stop-color="#e8b86a"/><stop offset="1" stop-color="#c98a3e"/></linearGradient><linearGradient id="gWater" x1="0" y1="0" x2="1" y2="1"><stop offset="0" stop-color="#2a6ad0"/><stop offset="1" stop-color="#3fa6e8"/></linearGradient><radialGradient id="gSun" cx="0.5" cy="0.5" r="0.5"><stop offset="0" stop-color="#ffc23a"/><stop offset="1" stop-color="#f59a1c"/></radialGradient></defs>
<rect x="48" y="728.8" width="288.3" height="39.2" fill="#f2f2f2"/>
<g fill="#ffffff"><path d="M16,741.2 L22.9,740.2 V747.3 H16 Z"/><path d="M23.9,740.1 L32.2,738.9 V747.3 H23.9 Z"/><path d="M16,748.3 H22.9 V755.4 L16,754.4 Z"/><path d="M23.9,748.3 H32.2 V756.6 L23.9,755.5 Z"/></g>
<circle cx="70.3" cy="746.8" r="5.2" fill="none" stroke="#222" stroke-width="1.4"/><path d="M66.6,750.5 L60.5,756.6" stroke="#222" stroke-width="1.6" stroke-linecap="round"/>
<text transform="translate(87.71,753.20) scale(0.951,1)" font-size="15.36" fill="#262626">Type here to search</text>
<path d="M296,750.9 L336.2,749 V768 H270 C280,760 288,753 296,750.9 Z" fill="url(#gSand)"/>
<path d="M257,768 C264,760 276,754 302,753.2 L302,755.8 C284,757 276,762 272,768 Z" fill="url(#gWater)"/>
<ellipse cx="320" cy="758.2" rx="13.3" ry="7.4" fill="#4bb7ec"/><ellipse cx="320" cy="757.6" rx="4.6" ry="2.2" fill="#2a7fb8"/>
<rect x="292.6" y="746" width="1.8" height="19.5" fill="#f3e9ee"/>
<path d="M275.6,747 C278,739 286,734.3 293.5,734.3 C301,734.3 309.5,739 311.8,747 C309,745.5 306.5,746 304.3,747.5 C302,745.5 298,745.3 293.5,747.3 C289,745.3 285,745.5 282.7,747.5 C280.5,746 278,745.5 275.6,747 Z" fill="#f07b64"/>
<path d="M284,745.8 C285.5,740 289,735.5 293.5,734.4 C291,738 290,742 290.5,746.3 Z M303,745.8 C301.5,740 298,735.5 293.5,734.4 C296,738 297,742 296.5,746.3 Z" fill="#2a7bb0"/>
<path d="M275.6,747 C278,745.5 280.5,746 282.7,747.5 C285,745.5 289,745.3 293.5,747.3 C298,745.3 302,745.5 304.3,747.5 C306.5,746 309,745.5 311.8,747" fill="none" stroke="#c9b8e0" stroke-width="1.2"/>
<circle cx="293.5" cy="732.6" r="1.6" fill="#f3e9ee"/>
<g transform="translate(362.8,748)"><path d="M0,0 L-9.7,-5.6 A11.2,11.2 0 0,1 9.7,-5.6 Z" fill="#db4437"/><path d="M0,0 L9.7,-5.6 A11.2,11.2 0 0,1 0,11.2 Z" fill="#f4c20d"/><path d="M0,0 L0,11.2 A11.2,11.2 0 0,1 -9.7,-5.6 Z" fill="#1e9e4a"/><circle r="5.4" fill="#fff"/><circle r="4.2" fill="#4a8af4"/></g>
<circle cx="412" cy="748" r="12" fill="#1ed760"/>
<path d="M404.5,744.3 C409,742.5 415.5,742.8 419.8,745.3 M405.3,748.3 C409,747 414.5,747.3 418.2,749.3 M406.2,752 C409.5,751 413.5,751.2 416.5,752.8" fill="none" stroke="#111" stroke-width="1.9" stroke-linecap="round"/>
<rect x="436.6" y="728" width="44.1" height="40" fill="#4a3f3a"/>
<rect x="449.5" y="736.5" width="21.5" height="21" fill="#f4f8fc" stroke="#5a86c8" stroke-width="1"/>
<path d="M453.3,748.5 L468,752 L468,756.8 L453.3,756.8 Z" fill="#d6e3f3"/>
<text x="450.5" y="751.2" font-family="Liberation Serif" font-weight="bold" font-size="16" fill="#1e5bb8" textLength="16" lengthAdjust="spacingAndGlyphs">W</text>
<rect x="481" y="730" width="2" height="36" fill="#5a504b" opacity="0.6"/>
<path d="M499,745 C502,738 512,737 517,741 C520,744 517,746 515.5,748 C514,750 517,752 514.5,754.5 C510,758 499.5,756 497.5,751 C496.8,749 497.5,747 499,745 Z" fill="#cfe3f5"/>
<circle cx="503" cy="744" r="1.7" fill="#e04040"/><circle cx="507.5" cy="741.5" r="1.7" fill="#40b040"/><circle cx="512.3" cy="742.5" r="1.7" fill="#f0c030"/><circle cx="502" cy="749.5" r="1.5" fill="#3a70c0"/>
<path d="M508,758.5 L520.5,739" stroke="#e8b070" stroke-width="2.2" stroke-linecap="round"/><path d="M519,741 L522,735.5 L523,737.5 Z" fill="#f0d0a0"/>
<rect x="343.3" y="766" width="30.8" height="2" fill="#f3c8b0"/>
<rect x="391.5" y="766" width="40.5" height="2" fill="#f3c8b0"/>
<rect x="437" y="766" width="43.5" height="2" fill="#f3c8b0"/>
<rect x="490" y="766" width="40" height="2" fill="#f3c8b0"/>
<defs><linearGradient id="gSun2" x1="0" y1="0" x2="0" y2="1"><stop offset="0" stop-color="#f7c436"/><stop offset="1" stop-color="#ef8420"/></linearGradient></defs>
<circle cx="700" cy="748" r="10.3" fill="url(#gSun2)"/>
<g fill="#f7dc96"><rect x="700" y="741" width="12" height="1.8"/><rect x="692" y="745" width="20" height="1.8"/><rect x="688.2" y="749.2" width="12" height="1.8"/><rect x="702" y="749.2" width="7" height="1.8"/><rect x="688.2" y="753.2" width="10" height="1.8"/><rect x="700" y="753.2" width="8" height="1.8"/></g>
<text transform="translate(719.73,752.90) scale(0.905,1)" font-size="14.78" fill="#ffffff">40°C</text>
<path d="M775.2,752.6 L781,746.5 L786.8,752.6" fill="none" stroke="#fff" stroke-width="1.4"/>
<path d="M801,741.5 C803.5,739.8 806.5,739.8 809,741.5 M801,754.2 C803.5,755.9 806.5,755.9 809,754.2" fill="none" stroke="#fff" stroke-width="1.1"/><rect x="800.8" y="745" width="6" height="6" fill="none" stroke="#fff" stroke-width="1.1"/><path d="M806.8,747 L810.6,745.2 V750.8 L806.8,749" fill="none" stroke="#fff" stroke-width="1.1"/>
<rect x="823.5" y="742.8" width="13" height="8.6" fill="none" stroke="#fff" stroke-width="1.1"/><rect x="821.5" y="743" width="4" height="4.2" fill="#382a24" stroke="#fff" stroke-width="1.1"/><path d="M823.5,747.2 V754.5 M830,751.4 V754.5 M826,754.8 H834" stroke="#fff" stroke-width="1.1"/>
<path d="M846,745.5 H849 L853,742 V754 L849,750.5 H846 Z" fill="none" stroke="#fff" stroke-width="1.2" stroke-linejoin="round"/><path d="M855.5,745.5 C856.8,747 856.8,749 855.5,750.5 M858,743.5 C860.3,746 860.3,750 858,752.5 M860.5,741.5 C863.8,745 863.8,751 860.5,754.5" fill="none" stroke="#fff" stroke-width="1.1"/>
<text transform="translate(870.63,752.40) scale(0.868,1)" font-size="12.46" fill="#ffffff">ENG</text>
<text transform="translate(921.33,742.80) scale(0.937,1)" font-size="12.17" fill="#ffffff">22:26</text>
<text transform="translate(906.84,761.30) scale(0.907,1)" font-size="12.61" fill="#ffffff">17-05-2023</text>
<path d="M982.8,739.6 H999.4 V753 H990.5 L989,756.3 L987.8,753 H982.8 Z" fill="#fff"/>
<path d="M986,743.4 H996 M986,746.5 H996 M986,749.5 H992" stroke="#2f2520" stroke-width="1.2"/>
<circle cx="998.4" cy="755.5" r="8" fill="#333" stroke="#9a9290" stroke-width="1"/>
<text transform="translate(994.90,759.40) scale(0.970,1)" font-size="12.46" fill="#fff">7</text>
<rect x="1019" y="728" width="1" height="40" fill="#8a7f7a"/>
<text transform="translate(306.40,17.20) scale(0.912,1)" font-size="12.46" fill="#1b1b1b">Anchal 1312 (Last saved by user)</text>
<text transform="translate(480.87,17.20) scale(1.310,1)" font-size="12.46" fill="#1b1b1b">-</text>
<text transform="translate(490.42,17.20) scale(0.980,1)" font-size="12.46" fill="#1b1b1b">Microsoft Word (Product Activation Failed)</text>
<text transform="translate(18.88,40.80) scale(1.006,1)" font-size="11.45" fill="#ffffff">File</text>
<text transform="translate(72.28,40.80) scale(0.995,1)" font-size="11.59" fill="#3b3b3b">Home</text>
<text transform="translate(130.24,40.80) scale(1.019,1)" font-size="11.59" fill="#3b3b3b">Insert</text>
<text transform="translate(187.51,40.80) scale(0.955,1)" font-size="11.59" fill="#3b3b3b">Page Layout</text>
<text transform="translate(277.32,40.80) scale(0.949,1)" font-size="11.59" fill="#3b3b3b">References</text>
<text transform="translate(361.53,40.80) scale(1.046,1)" font-size="11.59" fill="#3b3b3b">Mailings</text>
<text transform="translate(433.41,40.80) scale(0.965,1)" font-size="11.59" fill="#3b3b3b">Review</text>
<text transform="translate(497.84,40.80) scale(1.001,1)" font-size="11.59" fill="#3b3b3b">View</text>
<text transform="translate(3.20,129.70) scale(1.113,1)" font-size="10.72" fill="#5d6775">Clipboard</text>
<text transform="translate(189.54,129.70) scale(1.115,1)" font-size="10.72" fill="#5d6775">Font</text>
<text transform="translate(423.48,129.70) scale(1.072,1)" font-size="10.72" fill="#5d6775">Paragraph</text>
<text transform="translate(731.23,129.70) scale(0.973,1)" font-size="10.72" fill="#5d6775">Styles</text>
<text transform="translate(955.61,129.70) scale(1.154,1)" font-size="10.72" fill="#5d6775">Editing</text>
<text transform="translate(12.85,99.80) scale(0.990,1)" font-size="10.72" fill="#333">Paste</text>
</svg>
</body></html>
